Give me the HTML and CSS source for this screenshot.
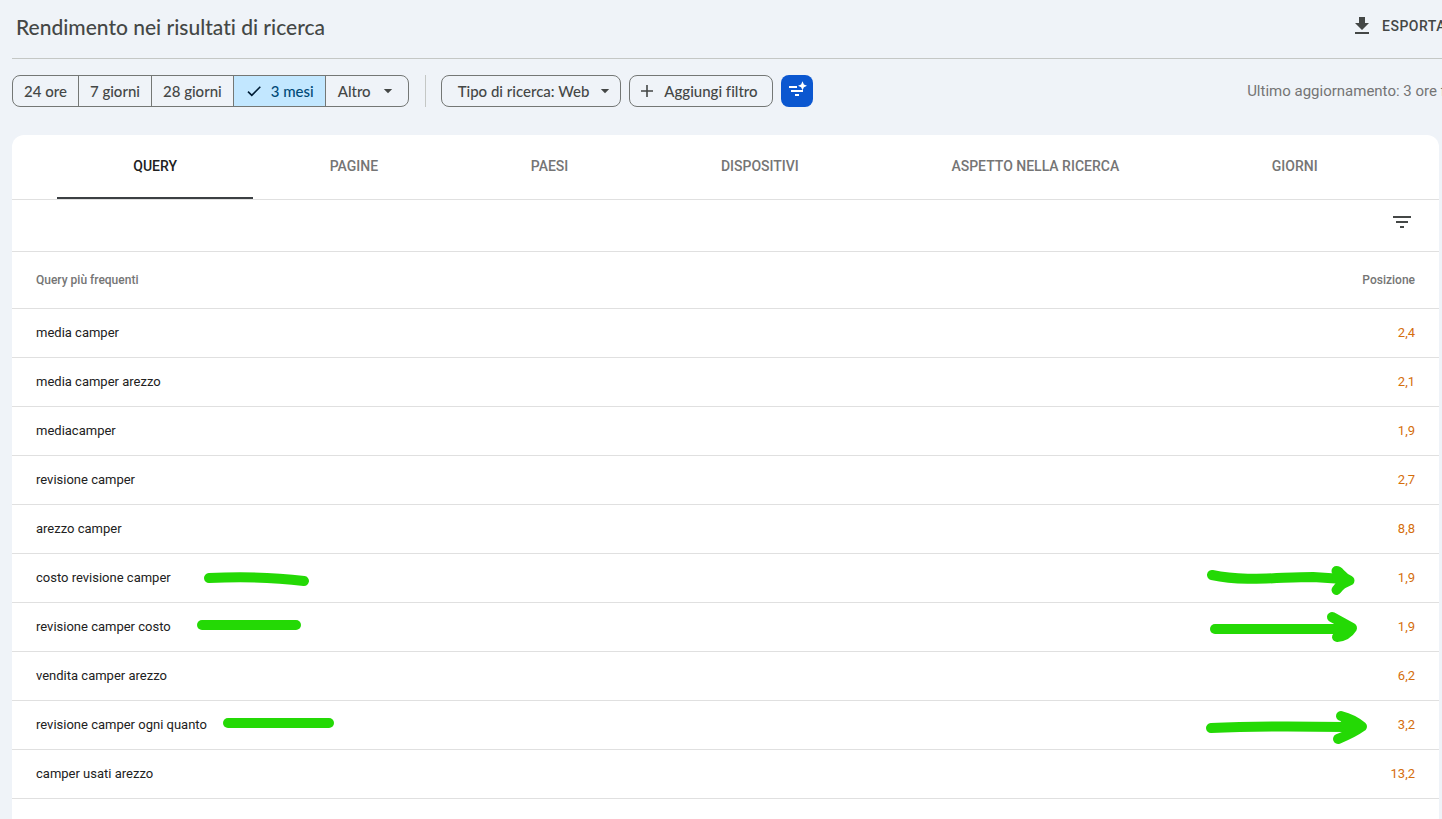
FILE: index.html
```html
<!DOCTYPE html>
<html lang="it">
<head>
    <meta charset="UTF-8">
    <meta name="viewport" content="width=device-width, initial-scale=1.0">
    <title>Rendimento nei risultati di ricerca</title>
    <link rel="stylesheet" href="styles.css">
</head>
<body>

    <header class="page-header">
        <h1>Rendimento nei risultati di ricerca</h1>
        <button type="button" class="export-btn">
            <svg width="24" height="24" viewBox="0 0 24 24" fill="currentColor" aria-hidden="true"><path d="M19 9h-4V3H9v6H5l7 7 7-7zM5 18v2h14v-2H5z"/></svg>
            ESPORTA
        </button>
    </header>

    <div class="toolbar">
        <div class="periods">
            <button type="button">24 ore</button>
            <button type="button">7 giorni</button>
            <button type="button">28 giorni</button>
            <button type="button" class="selected" aria-pressed="true">
                <svg width="18" height="18" viewBox="0 0 18 18" fill="none" stroke="currentColor" stroke-width="1.6" aria-hidden="true"><path d="M3 9.6l3.8 3.8L15.3 4.8"/></svg>
                3 mesi
            </button>
            <button type="button" class="more">
                Altro
                <svg width="10" height="5" viewBox="0 0 10 5" fill="currentColor" aria-hidden="true"><path d="M0.8 0h8.400L5 4.300z"/></svg>
            </button>
        </div>
        <span class="separator"></span>
        <button type="button" class="chip chip-type">
            Tipo di ricerca: Web
            <svg width="10" height="5" viewBox="0 0 10 5" fill="currentColor" aria-hidden="true"><path d="M0.8 0h8.400L5 4.300z"/></svg>
        </button>
        <button type="button" class="chip chip-add">
            <svg width="14" height="14" viewBox="0 0 14 14" fill="none" stroke="currentColor" stroke-width="1.6" aria-hidden="true"><path d="M7 1v12M1 7h12"/></svg>
            Aggiungi filtro
        </button>
        <button type="button" class="smart-btn" aria-label="Filtri intelligenti">
            <svg width="20" height="20" viewBox="0 0 20 20" fill="currentColor" aria-hidden="true">
                <path d="M2 5h8v2H2zM4 9h12v2H4zM8 13h4v2H8z"/>
                <path d="M15.500 0.300l1.400 3.100 3.100 1.400-3.100 1.400-1.400 3.100-1.400-3.100-3.100-1.400 3.100-1.400z"/>
            </svg>
        </button>
        <span class="updated">Ultimo aggiornamento: 3 ore fa</span>
    </div>

    <main class="card">
        <nav class="tabs">
            <a href="#query" class="active">QUERY</a>
            <a href="#pagine">PAGINE</a>
            <a href="#paesi">PAESI</a>
            <a href="#dispositivi">DISPOSITIVI</a>
            <a href="#aspetto">ASPETTO NELLA RICERCA</a>
            <a href="#giorni">GIORNI</a>
        </nav>

        <div class="filter-row">
            <button type="button" aria-label="Filtra righe">
                <svg width="24" height="24" viewBox="0 0 24 24" fill="currentColor" aria-hidden="true"><path d="M10 18h4v-2h-4v2zM3 6v2h18V6H3zm3 7h12v-2H6v2z"/></svg>
            </button>
        </div>

        <table>
            <thead>
                <tr><th>Query più frequenti</th><th>Posizione</th></tr>
            </thead>
            <tbody>
                <tr><td>media camper</td><td>2,4</td></tr>
                <tr><td>media camper arezzo</td><td>2,1</td></tr>
                <tr><td>mediacamper</td><td>1,9</td></tr>
                <tr><td>revisione camper</td><td>2,7</td></tr>
                <tr><td>arezzo camper</td><td>8,8</td></tr>
                <tr>
                    <td>costo revisione camper
                        <svg class="mark underline" viewBox="0 0 160 48"><path d="M17 24C50 22.500 80 23 112 27"/></svg>
                    </td>
                    <td>1,9
                        <svg class="mark arrow" viewBox="0 0 180 48"><path d="M17 21C50 28 85 23 118 23L148 25"/><path d="M141.500 17C145 17 145 22 154.500 26.500C147 30 145 31 141.500 36M142 24L150 26"/></svg>
                    </td>
                </tr>
                <tr>
                    <td>revisione camper costo
                        <svg class="mark underline" viewBox="0 0 160 48"><path d="M10 22H104"/></svg>
                    </td>
                    <td>1,9
                        <svg class="mark arrow" viewBox="0 0 180 48"><path d="M20 26H150"/><path d="M137 14L157 25Q152 33 142 34L150 27"/></svg>
                    </td>
                </tr>
                <tr><td>vendita camper arezzo</td><td>6,2</td></tr>
                <tr>
                    <td>revisione camper ogni quanto
                        <svg class="mark underline" viewBox="0 0 160 48"><path d="M36 22H137"/></svg>
                    </td>
                    <td>3,2
                        <svg class="mark arrow" viewBox="0 0 180 48"><path d="M16 27Q68 24.500 150 26"/><path d="M146 15Q158 18 167 25.500Q158 32 143 38M150 23L160 27"/></svg>
                    </td>
                </tr>
                <tr><td>camper usati arezzo</td><td>13,2</td></tr>
            </tbody>
        </table>
    </main>

</body>
</html>
```

FILE: styles.css
```css
* {
    box-sizing: border-box;
}

body {
    display: flex;
    flex-direction: column;
    min-height: 100vh;
    margin: 0;
    background: #eff3f8;
    color: #444746;
    font-family: Roboto, sans-serif;
    font-size: 14px;
    overflow-x: hidden;
}

button {
    display: flex;
    align-items: center;
    margin: 0;
    padding: 0;
    border: 0;
    background: none;
    color: inherit;
    font: 500 15px Lato, sans-serif;
    font-variant-ligatures: none;
    white-space: nowrap;
    cursor: pointer;
}

/* Header */
.page-header {
    display: flex;
    align-items: center;
    justify-content: space-between;
    height: 59px;
    margin: 0 -8px 0 12px;
    padding: 0 4px 4px;
    border-bottom: 1px solid #c4c7c5;
}

h1 {
    margin: 0;
    padding-bottom: 2px;
    font: 500 21px Lato, sans-serif;
    font-variant-ligatures: none;
}

.export-btn {
    gap: 8px;
    padding-bottom: 2px;
    font: 500 14px Roboto, sans-serif;
    letter-spacing: 0.5px;
}

/* Toolbar */
.toolbar {
    display: flex;
    align-items: center;
    margin: 16px -12px 28px 12px;
}

.periods {
    display: flex;
    height: 32px;
    border: 1px solid #747775;
    border-radius: 8px;
    overflow: hidden;
}

.periods button {
    padding: 0 11px;
}

.periods button + button {
    border-left: 1px solid #747775;
}

.periods .selected {
    gap: 8px;
    background: #c2e7ff;
    color: #004a77;
}

.periods .selected svg {
    color: #001d35;
}

.periods .more {
    gap: 12px;
    padding: 0 15px 0 12px;
}

.separator {
    width: 1px;
    height: 32px;
    margin: 0 15px 0 16px;
    background: #c4c7c5;
}

.chip {
    height: 32px;
    margin-right: 8px;
    border: 1px solid #747775;
    border-radius: 8px;
}

.chip-type {
    gap: 11px;
    padding: 0 10px 0 16px;
}

.chip-add {
    gap: 10px;
    padding: 0 14px 0 10px;
}

.smart-btn {
    justify-content: center;
    width: 32px;
    height: 32px;
    border-radius: 8px;
    background: #0b57d0;
    color: #fff;
}

.updated {
    margin-left: auto;
    color: #757575;
    font-size: 15px;
    white-space: nowrap;
}

/* Report card */
.card {
    flex: 1;
    margin: 0 3px 0 12px;
    background: #fff;
    border-radius: 12px 12px 0 0;
}

.tabs {
    display: flex;
    height: 65px;
    padding: 0 45px;
    border-bottom: 1px solid #e0e0e0;
}

.tabs a {
    flex: 1 1 auto;
    padding-top: 22px;
    color: #757575;
    font-weight: 500;
    line-height: 18px;
    text-align: center;
    text-decoration: none;
}

.tabs .active {
    border-bottom: 2px solid #3c4043;
    color: #212121;
}

.filter-row {
    display: flex;
    justify-content: flex-end;
    height: 52px;
    padding: 10px 25px;
    border-bottom: 1px solid #e0e0e0;
}

.filter-row button {
    height: 24px;
}

table {
    width: 100%;
    border-collapse: separate;
    border-spacing: 0;
}

th, td {
    position: relative;
    height: 49px;
    padding: 0 24px 2px;
    border-bottom: 1px solid #e0e0e0;
    color: #212121;
    font-size: 13px;
    text-align: left;
}

th {
    height: 57px;
    padding-bottom: 0;
    color: #757575;
    font-size: 12px;
    font-weight: 500;
}

th:last-child, td:last-child {
    text-align: right;
}

td:last-child {
    color: #d56e0c;
}

/* Green highlighter strokes */
.mark {
    position: absolute;
    top: 0;
    height: 48px;
    fill: none;
    stroke: #24d905;
    stroke-width: 10;
    stroke-linecap: round;
    stroke-linejoin: round;
}

.underline {
    left: 180px;
    width: 160px;
}

.arrow {
    right: 64px;
    width: 180px;
}
```
